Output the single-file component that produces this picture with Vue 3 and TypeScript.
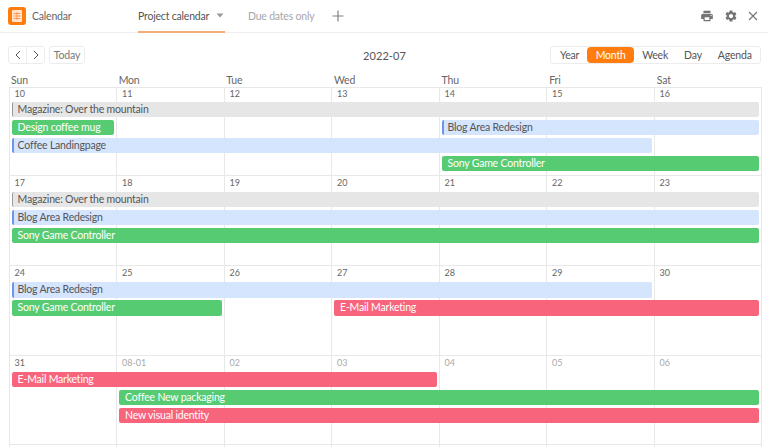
<script setup lang="ts">
interface Ev { label: string; kind: string; start: number; span: number; row: number }
interface Week { dateH: number; height: number; days: { d: string; muted?: boolean }[]; events: Ev[]; first?: boolean }

const dayNames = ['Sun', 'Mon', 'Tue', 'Wed', 'Thu', 'Fri', 'Sat']
const views = ['Year', 'Month', 'Week', 'Day', 'Agenda']
const mk = (a: string[], muted = 0) => a.map((d, i) => ({ d, muted: i >= a.length - muted && muted > 0 }))

const weeks: Week[] = [
  {
    first: true, dateH: 11, height: 88,
    days: mk(['10', '11', '12', '13', '14', '15', '16']),
    events: [
      { label: 'Magazine: Over the mountain', kind: 'gray', start: 1, span: 7, row: 2 },
      { label: 'Design coffee mug', kind: 'green', start: 1, span: 1, row: 3 },
      { label: 'Blog Area Redesign', kind: 'blue', start: 5, span: 3, row: 3 },
      { label: 'Coffee Landingpage', kind: 'blue', start: 1, span: 6, row: 4 },
      { label: 'Sony Game Controller', kind: 'green', start: 5, span: 3, row: 5 },
    ],
  },
  {
    dateH: 13, height: 90,
    days: mk(['17', '18', '19', '20', '21', '22', '23']),
    events: [
      { label: 'Magazine: Over the mountain', kind: 'gray', start: 1, span: 7, row: 2 },
      { label: 'Blog Area Redesign', kind: 'blue', start: 1, span: 7, row: 3 },
      { label: 'Sony Game Controller', kind: 'green', start: 1, span: 7, row: 4 },
    ],
  },
  {
    dateH: 13.6, height: 90,
    days: mk(['24', '25', '26', '27', '28', '29', '30']),
    events: [
      { label: 'Blog Area Redesign', kind: 'blue', start: 1, span: 6, row: 2 },
      { label: 'Sony Game Controller', kind: 'green', start: 1, span: 2, row: 3 },
      { label: 'E-Mail Marketing', kind: 'red', start: 4, span: 4, row: 3 },
    ],
  },
  {
    dateH: 13.5, height: 89,
    days: mk(['31', '08-01', '02', '03', '04', '05', '06'], 6),
    events: [
      { label: 'E-Mail Marketing', kind: 'red', start: 1, span: 4, row: 2 },
      { label: 'Coffee New packaging', kind: 'green', start: 2, span: 6, row: 3 },
      { label: 'New visual identity', kind: 'red', start: 2, span: 6, row: 4 },
    ],
  },
  { dateH: 0, height: 4, days: mk(['', '', '', '', '', '', '']), events: [] },
]
</script>

<template>
  <div class="page">
    <header class="topbar">
      <div class="brand">
        <span class="logo">
          <svg viewBox="0 0 18 18" width="18" height="18">
            <rect x="4" y="3" width="10" height="12" rx="1" fill="#ffe6cd" />
            <path d="M5.5 6.5h7M5.5 9h7M5.5 11.5h7M9 5v8" stroke="#ff9a4a" stroke-width="1" fill="none" />
          </svg>
        </span>
        <span class="brand-name">Calendar</span>
      </div>
      <nav class="tabs">
        <div class="tab active">
          <span>Project calendar</span>
          <svg class="caret" viewBox="0 0 8 5" width="8" height="5"><path d="M0.5 0.5h7L4 4.5z" fill="#999" /></svg>
        </div>
        <div class="tab muted">Due dates only</div>
        <svg class="plus" viewBox="0 0 12 12" width="12" height="12">
          <path d="M6 .5v11M.5 6h11" stroke="#808080" stroke-width="1.2" fill="none" />
        </svg>
      </nav>
      <div class="actions">
        <svg viewBox="0 0 24 24" width="14" height="14"><path fill="#757575" d="M19 8H5c-1.66 0-3 1.34-3 3v6h4v4h12v-4h4v-6c0-1.66-1.34-3-3-3zm-3 11H8v-5h8v5zm3-7c-.55 0-1-.45-1-1s.45-1 1-1 1 .45 1 1-.45 1-1 1zm-1-9H6v4h12V3z" /></svg>
        <svg viewBox="0 0 24 24" width="14" height="14"><path fill="#757575" d="M19.14 12.94c.04-.3.06-.61.06-.94 0-.32-.02-.64-.07-.94l2.03-1.58a.49.49 0 0 0 .12-.61l-1.92-3.32a.488.488 0 0 0-.59-.22l-2.39.96c-.5-.38-1.03-.7-1.62-.94l-.36-2.54a.484.484 0 0 0-.48-.41h-3.84c-.24 0-.43.17-.47.41l-.36 2.54c-.59.24-1.13.57-1.62.94l-2.39-.96c-.22-.08-.47 0-.59.22L2.74 8.87c-.12.21-.08.47.12.61l2.03 1.58c-.05.3-.09.63-.09.94s.02.64.07.94l-2.03 1.58a.49.49 0 0 0-.12.61l1.92 3.32c.12.22.37.29.59.22l2.39-.96c.5.38 1.03.7 1.62.94l.36 2.54c.05.24.24.41.48.41h3.84c.24 0 .44-.17.47-.41l.36-2.54c.59-.24 1.13-.56 1.62-.94l2.39.96c.22.08.47 0 .59-.22l1.92-3.32c.12-.22.07-.47-.12-.61l-2.01-1.58zM12 15.6c-1.98 0-3.6-1.62-3.6-3.6s1.62-3.6 3.6-3.6 3.6 1.62 3.6 3.6-1.62 3.6-3.6 3.6z" /></svg>
        <svg viewBox="0 0 10 10" width="10" height="10"><path d="M1 1l8 8M9 1l-8 8" stroke="#757575" stroke-width="1.1" fill="none" /></svg>
      </div>
    </header>

    <section class="toolbar">
      <div class="left">
        <div class="nav-group">
          <button class="nav-btn">
            <svg viewBox="0 0 6 10" width="6" height="10"><path d="M5 1L1 5l4 4" stroke="#555" stroke-width="1" fill="none" /></svg>
          </button>
          <button class="nav-btn">
            <svg viewBox="0 0 6 10" width="6" height="10"><path d="M1 1l4 4-4 4" stroke="#555" stroke-width="1" fill="none" /></svg>
          </button>
        </div>
        <button class="today">Today</button>
      </div>
      <div class="title">2022-07</div>
      <div class="views">
        <span v-for="v in views" :key="v" class="view" :class="'v-' + v.toLowerCase()">{{ v }}</span>
      </div>
    </section>

    <div class="weekdays">
      <span v-for="n in dayNames" :key="n">{{ n }}</span>
    </div>

    <div class="calendar">
      <div
        v-for="(w, wi) in weeks"
        :key="wi"
        class="week"
        :class="{ first: w.first }"
        :style="{ height: w.height + 'px', gridTemplateRows: w.dateH + 'px repeat(4, 15.4px) 1fr' }"
      >
        <div
          v-for="(c, ci) in w.days"
          :key="ci"
          class="cell"
          :class="{ muted: c.muted }"
          :style="{ gridColumn: ci + 1 }"
        >{{ c.d }}</div>
        <div
          v-for="(e, ei) in w.events"
          :key="ei"
          class="event"
          :class="e.kind"
          :style="{ gridColumn: e.start + ' / span ' + e.span, gridRow: e.row }"
        >{{ e.label }}</div>
      </div>
    </div>
  </div>
</template>

<style scoped>
.page {
  width: 768px;
  height: 447px;
  overflow: hidden;
  background: #fff;
  font-family: "Lato", "Open Sans", sans-serif;
  font-size: 10.5px;
  letter-spacing: -0.2px;
  color: #555;
  white-space: nowrap;
}
.topbar {
  height: 33px;
  box-sizing: border-box;
  border-bottom: 1px solid #efefef;
  display: flex;
  align-items: center;
  padding: 0 10px 0 8px;
}
.brand {
  width: 130px;
  display: flex;
  align-items: center;
  gap: 6px;
}
.logo {
  width: 18px;
  height: 18px;
  background: #ff7d0e;
  border-radius: 3px;
  display: flex;
}
.brand-name {
  color: #666;
}
.tabs {
  display: flex;
  align-items: center;
  height: 100%;
  flex: 1;
}
.tab {
  height: 100%;
  display: flex;
  align-items: center;
}
.tab.active {
  width: 87px;
  height: 33px;
  gap: 7px;
  color: #555;
  border-bottom: 2px solid #f6ab7c;
  box-sizing: border-box;
  margin-top: 1px;
}
.tab.muted {
  margin-left: 23px;
  color: #a6a6a6;
}
.plus {
  margin-left: 18px;
}
.actions {
  display: flex;
  align-items: center;
  gap: 10px;
}
.toolbar {
  margin: 13px 7px 0 8px;
  height: 18px;
  display: grid;
  grid-template-columns: 1fr auto 1fr;
  align-items: center;
}
.left {
  display: flex;
  gap: 4px;
}
.nav-group {
  display: flex;
  width: 37px;
  height: 18px;
  border: 1px solid #ececec;
  border-radius: 3px;
  box-sizing: border-box;
}
.nav-btn {
  flex: 1;
  padding: 0;
  border: 0;
  background: none;
  display: flex;
  align-items: center;
  justify-content: center;
}
.nav-btn + .nav-btn {
  border-left: 1px solid #ececec;
}
.today {
  width: 36px;
  height: 18px;
  padding: 0;
  border: 1px solid #ececec;
  border-radius: 3px;
  background: #fff;
  color: #777;
  font: inherit;
  letter-spacing: inherit;
}
.title {
  font-size: 11px;
  letter-spacing: 0.1px;
  color: #555;
}
.views {
  justify-self: end;
  display: flex;
  align-items: center;
  height: 18px;
  width: 211px;
  padding: 0 9px;
  box-sizing: border-box;
  border: 1px solid #ececec;
  border-radius: 3px;
}
.view {
  color: #555;
  flex: none;
}
.v-month {
  margin: 0 8px;
  width: 47px;
  height: 16px;
  line-height: 16px;
  text-align: center;
  background: #ff7d0e;
  color: #fff;
  border-radius: 4px;
}
.v-day {
  margin: 0 16px;
}
.weekdays {
  margin: 0 6px 0 8.6px;
  height: 23px;
  display: grid;
  grid-template-columns: repeat(7, 1fr);
  align-items: end;
}
.weekdays span {
  padding-left: 2.5px;
  line-height: 14px;
  color: #666;
}
.calendar {
  margin: 0 6px 0 8.6px;
  border-right: 1px solid #e8e8e8;
}
.week {
  display: grid;
  grid-template-columns: repeat(7, 1fr);
  row-gap: 2.6px;
  border-top: 1px solid #e8e8e8;
  box-sizing: border-box;
  overflow: hidden;
}
.cell {
  grid-row: 1 / -1;
  border-left: 1px solid #e8e8e8;
  padding: 1px 0 0 5px;
  font-size: 9px;
  line-height: 11px;
  letter-spacing: 0;
  color: #666;
  min-width: 0;
}
.week.first .cell {
  padding-top: 0;
}
.cell.muted {
  color: #aaa;
}
.event {
  margin: 0 2px 0 3px;
  min-width: 0;
  padding-left: 5px;
  line-height: 15.4px;
  border-radius: 2px;
  overflow: hidden;
  box-sizing: border-box;
}
.event.gray {
  background: #e6e6e6;
  border-left: 1px solid #999;
  color: #555;
}
.event.blue {
  background: #d4e5fd;
  border-left: 2px solid #6d95ec;
  color: #555;
  padding-left: 4px;
}
.event.green {
  background: #57cb72;
  color: #fff;
  padding-left: 6px;
}
.event.red {
  background: #f9647d;
  color: #fff;
  padding-left: 6px;
}
</style>
